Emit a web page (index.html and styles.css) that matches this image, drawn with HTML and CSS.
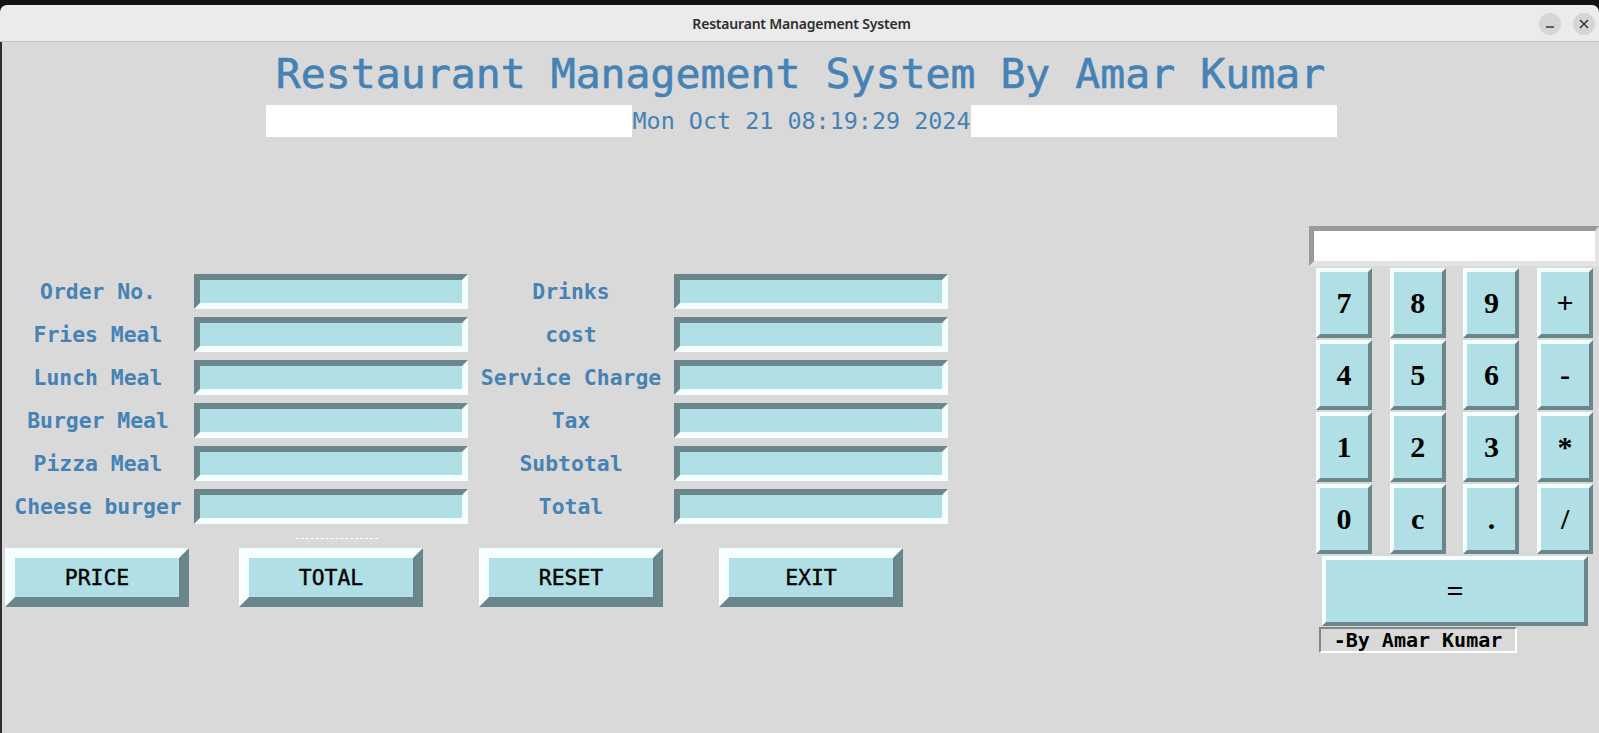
FILE: index.html
```html
<!DOCTYPE html>
<html lang="en">
<head>
<meta charset="utf-8">
<title>Restaurant Management System</title>
<link rel="stylesheet" href="styles.css">
</head>
<body>
<div class="topstrip"></div>
<div class="titlebar">
  <div></div>
  <div class="wtitle">Restaurant Management System</div>
  <div class="controls">
    <span class="ctl"><svg width="22" height="22" viewBox="0 0 22 22"><line x1="7" y1="14" x2="15" y2="14" stroke="#2e2e2e" stroke-width="1.4"/></svg></span>
    <span class="ctl"><svg width="22" height="22" viewBox="0 0 22 22"><path d="M7 7 L15 15 M15 7 L7 15" stroke="#2e2e2e" stroke-width="1.4" fill="none"/></svg></span>
  </div>
</div>
<div class="content">
  <h1 class="app-title">Restaurant Management System By Amar Kumar</h1>
  <div class="date-row">
    <div class="blank blank-l"></div>
    <div class="date">Mon Oct 21 08:19:29 2024</div>
    <div class="blank blank-r"></div>
  </div>
  <div class="main">
    <div class="left">
      <div class="form">
        <div class="lbl">Order No.</div><input class="entry" type="text">
        <div class="lbl">Drinks</div><input class="entry" type="text">
        <div class="lbl">Fries Meal</div><input class="entry" type="text">
        <div class="lbl">cost</div><input class="entry" type="text">
        <div class="lbl">Lunch Meal</div><input class="entry" type="text">
        <div class="lbl">Service Charge</div><input class="entry" type="text">
        <div class="lbl">Burger Meal</div><input class="entry" type="text">
        <div class="lbl">Tax</div><input class="entry" type="text">
        <div class="lbl">Pizza Meal</div><input class="entry" type="text">
        <div class="lbl">Subtotal</div><input class="entry" type="text">
        <div class="lbl">Cheese burger</div><input class="entry" type="text">
        <div class="lbl">Total</div><input class="entry" type="text">
      </div>
      <div class="sep"></div>
      <div class="actions">
        <button class="btn">PRICE</button>
        <button class="btn btn-2">TOTAL</button>
        <button class="btn">RESET</button>
        <button class="btn">EXIT</button>
      </div>
    </div>
    <div class="calc">
      <div class="display"></div>
      <div class="keys">
        <button class="key">7</button><button class="key">8</button><button class="key">9</button><button class="key">+</button>
        <button class="key">4</button><button class="key">5</button><button class="key">6</button><button class="key">-</button>
        <button class="key">1</button><button class="key">2</button><button class="key">3</button><button class="key">*</button>
        <button class="key">0</button><button class="key">c</button><button class="key">.</button><button class="key">/</button>
      </div>
      <button class="key key-eq">=</button>
      <div class="credit">-By Amar Kumar</div>
    </div>
  </div>
</div>
</body>
</html>
```
FILE: styles.css
```css
html, body {
  margin: 0;
  padding: 0;
  width: 1599px;
  height: 733px;
  overflow: hidden;
  background: #121212;
}

.topstrip {
  height: 5px;
  background: #121212;
}

.titlebar {
  height: 36px;
  background: #ebebeb;
  border-bottom: 1px solid #c3c3c3;
  border-top-left-radius: 7px;
  border-top-right-radius: 7px;
  display: grid;
  grid-template-columns: 1fr auto 1fr;
  align-items: center;
}

.wtitle {
  font-family: "Noto Sans", "Open Sans", sans-serif;
  font-size: 14px;
  font-weight: 600;
  color: #2e2e2e;
  letter-spacing: -0.2px;
  padding-left: 4px;
}

.controls {
  justify-self: end;
  display: flex;
  gap: 12px;
  padding-right: 4px;
  padding-top: 1px;
}

.ctl {
  width: 22px;
  height: 22px;
  border-radius: 50%;
  background: #d6d6d6;
  display: block;
}

.ctl svg {
  display: block;
}

.content {
  height: 691px;
  background: #d9d9d9;
  border-left: 2px solid #2f2f2f;
  display: flex;
  flex-direction: column;
}

.app-title {
  margin: 8px 0 0;
  font-family: "DejaVu Sans Mono", monospace;
  font-weight: normal;
  font-size: 41.5px;
  line-height: 48px;
  color: #4682b4;
  text-align: center;
  white-space: nowrap;
  -webkit-text-stroke: 0.6px #4682b4;
}

.date-row {
  margin-top: 7px;
  height: 32px;
  display: flex;
  justify-content: center;
  padding-left: 2px;
}

.blank {
  background: #ffffff;
}

.blank-l { width: 366px; }
.blank-r { width: 366px; }

.date {
  width: 339px;
  font-family: "DejaVu Sans Mono", monospace;
  font-size: 23.4px;
  line-height: 32px;
  color: #4682b4;
  text-align: center;
  white-space: nowrap;
}

.main {
  display: flex;
  align-items: flex-start;
}

.left {
  margin-top: 137px;
}

.form {
  display: grid;
  grid-template-columns: 192px 274px 206px 274px;
  grid-auto-rows: 35px;
  row-gap: 8px;
}

.lbl {
  display: flex;
  align-items: center;
  justify-content: center;
  font-family: "DejaVu Sans Mono", monospace;
  font-weight: bold;
  font-size: 21.4px;
  color: #4682b4;
  white-space: nowrap;
}

.entry {
  box-sizing: border-box;
  width: 274px;
  height: 35px;
  margin: 0;
  padding: 0;
  border: 6px solid;
  border-color: #6a868a #f6ffff #f6ffff #6a868a;
  background: #b0e0e6;
  outline: none;
}

.sep {
  width: 82px;
  height: 0;
  border-top: 1px dashed #ffffff;
  margin: 14px 0 0 294px;
}

.actions {
  margin-top: 9px;
  display: flex;
  padding-left: 3px;
}

.btn {
  box-sizing: border-box;
  width: 184px;
  height: 59px;
  margin: 0 0 0 56px;
  padding: 0;
  border: 10px solid;
  border-color: #f6ffff #6a868a #6a868a #f6ffff;
  background: #b0e0e6;
  font-family: "DejaVu Sans Mono", monospace;
  font-size: 21.4px;
  color: #000000;
  -webkit-text-stroke: 0.4px #000000;
}

.btn:first-child {
  margin-left: 0;
}

.btn-2 {
  margin-left: 50px;
}

.calc {
  margin-left: auto;
  margin-top: 89px;
  width: 290px;
  display: flex;
  flex-direction: column;
}

.display {
  box-sizing: border-box;
  width: 290px;
  height: 40px;
  border: 5px solid;
  border-right-width: 4px;
  border-color: #9a9a9a #e4e4e4 #e4e4e4 #9a9a9a;
  background: #ffffff;
}

.keys {
  margin: 2px 0 0 7px;
  display: grid;
  grid-template-columns: repeat(4, 56px);
  grid-auto-rows: 70px;
  column-gap: 17.7px;
  row-gap: 2px;
}

.key {
  box-sizing: border-box;
  margin: 0;
  padding: 0;
  border: 4px solid;
  border-color: #f6ffff #6a868a #6a868a #f6ffff;
  background: #b0e0e6;
  font-family: "Liberation Serif", "DejaVu Serif", serif;
  font-weight: bold;
  font-size: 30px;
  color: #000000;
}

.key-eq {
  margin: 2px 0 0 13px;
  width: 266px;
  height: 70px;
}

.credit {
  box-sizing: border-box;
  margin: 1px 0 0 10px;
  width: 198px;
  height: 26px;
  border: 2px solid;
  border-color: #858585 #ffffff #ffffff #858585;
  font-family: "DejaVu Sans Mono", monospace;
  font-weight: bold;
  font-size: 20px;
  line-height: 22px;
  color: #000000;
  text-align: center;
  white-space: nowrap;
}
```
